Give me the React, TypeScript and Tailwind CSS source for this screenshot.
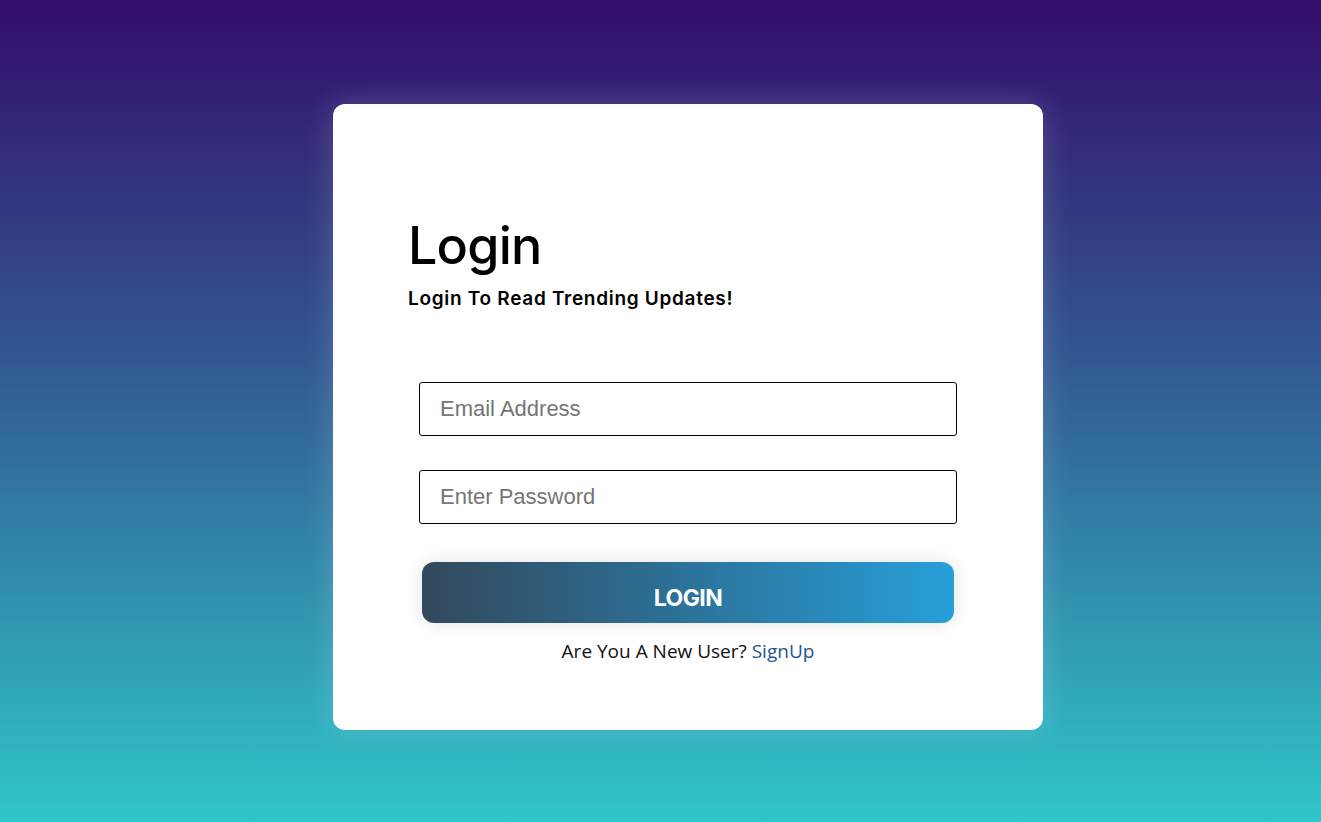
import React from "react";

export default function App() {
  return (
    <div className="min-h-screen w-full bg-[linear-gradient(to_bottom,#330d6b,#325a93_45%,#30c6ca)] pt-[104px] pb-[92px] pl-[55px]">
      <div className="mx-auto w-[710px] h-[626px] rounded-[12px] bg-white shadow-[0_0_30px_rgba(255,255,255,0.18)] pt-[112px]">
        <div className="px-[75px] font-['Inter',sans-serif] text-black">
          <h1 className="text-[52px] leading-[60px] font-medium tracking-[-0.8px]">Login</h1>
          <p className="mt-[10px] text-[19px] leading-[26px] font-semibold tracking-[0.7px]">
            Login To Read Trending Updates!
          </p>
        </div>
        <form className="mx-auto mt-[70px] w-[538px] flex flex-col items-center" onSubmit={(e) => e.preventDefault()}>
          <input
            type="email"
            placeholder="Email Address"
            className="w-full h-[54px] rounded-[3px] border border-black px-[20px] font-['Liberation_Sans',Arial,sans-serif] text-[22px] text-black placeholder:text-[#757575] outline-none"
          />
          <input
            type="password"
            placeholder="Enter Password"
            className="mt-[34px] w-full h-[54px] rounded-[3px] border border-black px-[20px] font-['Liberation_Sans',Arial,sans-serif] text-[22px] text-black placeholder:text-[#757575] outline-none"
          />
          <button
            type="submit"
            className="mt-[38px] w-[532px] h-[61px] pt-[11px] rounded-[12px] bg-[linear-gradient(to_right,#33485b,#2d6a8e_40%,#279fd9)] shadow-[0_0_18px_rgba(0,0,0,0.12)] text-white font-['Inter',sans-serif] font-bold text-[23px] leading-[30px] tracking-[-0.6px]"
          >
            LOGIN
          </button>
          <p className="mt-[15px] font-['Open_Sans',sans-serif] text-[19px] leading-[26px] text-[#111]">
            Are You A New User? <a href="#" className="text-[#22558c]">SignUp</a>
          </p>
        </form>
      </div>
    </div>
  );
}
